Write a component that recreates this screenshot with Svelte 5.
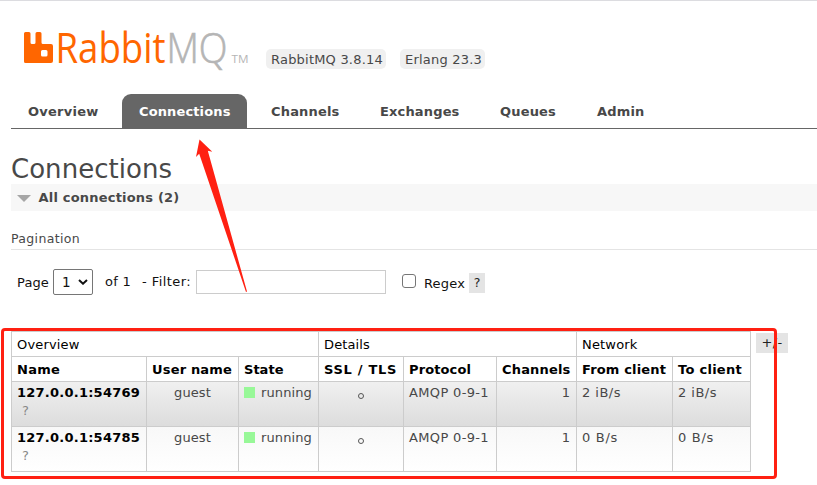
<script>
  const tabs = [
    { label: 'Overview', box: 104, text: 70.5 },
    { label: 'Connections', box: 125, text: 91.5, active: true },
    { label: 'Channels', box: 102, text: 68.5 },
    { label: 'Exchanges', box: 113, text: 79.5 },
    { label: 'Queues', box: 90, text: 56 },
    { label: 'Admin', box: 81, text: 47.5 }
  ];
  const columns = [135, 92, 80, 85, 93, 80, 96, 78];
  const groups = [
    { label: 'Overview', span: 3, text: 62.5 },
    { label: 'Details', span: 3, text: 46 },
    { label: 'Network', span: 2, text: 55.5 }
  ];
  const heads = [
    ['Name', 43], ['User name', 80], ['State', 39.5], ['SSL / TLS', 73],
    ['Protocol', 62], ['Channels', 68.5], ['From client', 84], ['To client', 64]
  ];
  const rows = [
    { name: '127.0.0.1:54769', rate: '2 iB/s', w: 39 },
    { name: '127.0.0.1:54785', rate: '0 B/s', w: 36 }
  ];

  // Spreads the tracking of a label so that it takes up the given width.
  function fit(node, width) {
    const natural = node.getBoundingClientRect().width;
    const spacing = (width - natural) / node.textContent.length;
    node.style.letterSpacing = `${spacing}px`;
  }
</script>

{#snippet label(text, width)}<span class="t" use:fit={width}>{text}</span>{/snippet}

<div class="page">
  <header>
    <svg class="logo" width="230" height="66" viewBox="0 -14 230 66">
      <path fill="#ff6600" d="M4.500 4h3.500q1.500 0 1.500 1.500v9q0 1.500 1.500 1.500h2q1.500 0 1.500-1.500v-9q0-1.500 1.500-1.500h3q1.500 0 1.500 1.500v9q0 1.500 1.500 1.500h8q2 0 2 2v15q0 2-2 2h-25.500q-1.500 0-1.500-1.500v-28q0-1.500 1.500-1.500zM21.500 22q-1.500 0-1.500 1.500v3.500q0 1.500 1.500 1.500h3.500q1.500 0 1.500-1.500v-3.500q0-1.500-1.500-1.500z" fill-rule="evenodd" />
      <text class="brand" x="34.500" y="34.500" fill="#ff6600" textLength="110" lengthAdjust="spacingAndGlyphs">Rabbit</text>
      <text class="brand thin" x="145.500" y="34.500" fill="#b5b5b5" textLength="61" lengthAdjust="spacingAndGlyphs">MQ</text>
      <text class="tm" x="210.500" y="34.500" fill="#b5b5b5" textLength="17" lengthAdjust="spacingAndGlyphs">TM</text>
    </svg>
    <span class="badge first">{@render label('RabbitMQ 3.8.14', 112)}</span>
    <span class="badge second">{@render label('Erlang 23.3', 77)}</span>
  </header>

  <nav>
    {#each tabs as tab}
      <a class:active={tab.active} style:width="{tab.box}px">{@render label(tab.label, tab.text)}</a>
    {/each}
  </nav>

  <h1>{@render label('Connections', 161)}</h1>
  <h2><i class="caret"></i>{@render label('All connections (2)', 141)}</h2>
  <h3>{@render label('Pagination', 69)}</h3>

  <div class="filter">
    <span class="page-label">{@render label('Page', 32)}</span>
    <span class="select">1<svg width="10" height="6" viewBox="0 0 10 6"><path d="M1 1l4 3.700 4-3.700" fill="none" stroke="#111" stroke-width="2" /></svg></span>
    <span class="of">{@render label('of 1', 26)}</span>
    <span class="dash">{@render label('- Filter:', 49)}</span>
    <span class="input"></span>
    <span class="check"></span>
    <span class="regex">{@render label('Regex', 41)}</span>
    <span class="help">?</span>
  </div>

  <div class="data">
    <table>
      <colgroup>
        {#each columns as w}<col style:width="{w}px" />{/each}
      </colgroup>
      <thead>
        <tr>
          {#each groups as g}<th class="group" colspan={g.span}>{@render label(g.label, g.text)}</th>{/each}
        </tr>
        <tr>
          {#each heads as [text, w]}<th>{@render label(text, w)}</th>{/each}
        </tr>
      </thead>
      <tbody>
        {#each rows as row, i}
          <tr class:alt={i === 0}>
            <td class="name">{@render label(row.name, 123)}<sub>?</sub></td>
            <td class="center">{@render label('guest', 37)}</td>
            <td><i class="dot"></i>{@render label('running', 51)}</td>
            <td class="center"><i class="ring"></i></td>
            <td>{@render label('AMQP 0-9-1', 80)}</td>
            <td class="right">1</td>
            <td>{@render label(row.rate, row.w)}</td>
            <td>{@render label(row.rate, row.w)}</td>
          </tr>
        {/each}
      </tbody>
    </table>
    <span class="toggle">{@render label('+/-', 21)}</span>
  </div>

  <div class="frame"></div>
  <svg class="arrow" width="60" height="160" viewBox="190 135 60 160">
    <path fill="#ff2012" d="M199.500 139.500L212.300 151.800L207.800 150.800L247 291.500L246 292L199.200 153.800L196 157z" />
  </svg>
</div>

<style>
  .page {
    position: relative;
    box-sizing: border-box;
    width: 817px;
    height: 485px;
    padding-left: 11px;
    overflow: hidden;
    border-top: 1px solid #dcdce0;
    background: #fff;
    color: #484848;
    font: 13px/16px Verdana, "DejaVu Sans", sans-serif;
  }
  .t { display: inline-block; white-space: nowrap; }
  header { display: flex; height: 93px; }
  .logo { flex: none; margin: 13px 0 0 10px; }
  .brand { font: 42.500px "Open Sans", sans-serif; }
  .thin { font-weight: 300; stroke: #b5b5b5; stroke-width: 0.700px; }
  .tm { font: 11px "Open Sans", sans-serif; }
  .badge {
    box-sizing: border-box;
    height: 20px;
    margin-top: 48px;
    padding: 3px 5px 1px;
    border-radius: 5px;
    background: #f0f0f0;
  }
  .first { width: 120px; margin-left: 15px; }
  .second { width: 85px; margin-left: 14px; }
  nav { display: flex; gap: 7px; height: 34px; border-bottom: 1px solid #666; }
  nav a {
    box-sizing: border-box;
    padding: 10px 0 0 17px;
    border-radius: 9px 9px 0 0;
    font-weight: bold;
  }
  nav .active { background: #666; color: #fff; }
  h1, h2, h3 { margin: 0; }
  h1 { height: 31px; padding-top: 24px; font-size: 26px; font-weight: normal; line-height: 32px; }
  h2 { display: flex; align-items: center; height: 27px; background: #f7f7f7; font-size: 13px; }
  .caret { margin: 1px 8px 0 5.500px; border: 7px solid transparent; border-top-color: #a6a6a6; border-bottom: 0; }
  h3 {
    height: 18px;
    padding-top: 20px;
    border-bottom: 1px solid #e4e4e4;
    font-size: 12.500px;
    font-weight: normal;
  }
  .filter { display: flex; height: 81px; color: #111; }
  .filter > span { box-sizing: border-box; flex: none; }
  .page-label { width: 42px; padding: 25px 0 0 6px; }
  .select {
    display: flex;
    align-items: center;
    width: 40px;
    height: 26px;
    margin-top: 19px;
    padding-left: 8px;
    gap: 7px;
    border: 1px solid #767676;
    border-radius: 2px;
    font-size: 13.500px;
  }
  .of { width: 49px; padding: 24px 0 0 12px; }
  .dash { width: 54px; padding-top: 24px; }
  .input { width: 190px; height: 24px; margin-top: 20px; border: 1px solid #ccc; }
  .check { width: 14px; height: 14px; margin: 24px 8px 0 16px; border: 1px solid #767676; border-radius: 3px; }
  .regex { width: 45px; padding-top: 26px; }
  .help, .toggle { height: 20px; background: #e4e4e4; color: #222; text-align: center; line-height: 20px; }
  .help { width: 16px; margin-top: 23px; font-size: 12.500px; }
  .data { display: flex; gap: 5px; }
  table { flex: none; width: 740px; border-collapse: collapse; table-layout: fixed; }
  th, td { box-sizing: border-box; padding: 0 5px; border: 1px solid #ccc; text-align: left; }
  th { height: 25px; padding-top: 1px; color: #000; }
  .group { font-weight: normal; }
  td { height: 45px; padding-top: 3px; vertical-align: top; }
  tbody tr { background: linear-gradient(#f8f8f8, #fff); }
  tbody .alt { background: linear-gradient(#f0f0f0, #dcdcdc); }
  .name { color: #000; font-weight: bold; }
  sub { display: block; padding: 2px 0 0 5px; color: #888; font-size: 13px; font-weight: normal; line-height: 16px; }
  .center { text-align: center; }
  .right { text-align: right; padding-right: 6px; }
  .dot { display: inline-block; width: 11px; height: 11px; margin-right: 6px; background: #98f898; vertical-align: -1px; }
  .ring { display: inline-block; box-sizing: border-box; width: 6px; height: 6px; border: 1px solid #555; border-radius: 50%; vertical-align: -2px; }
  .toggle { width: 32px; margin-top: 2px; }
  .frame {
    position: absolute;
    box-sizing: border-box;
    left: 1px;
    top: 327px;
    width: 776px;
    height: 151px;
    border: 3px solid #ff2012;
    border-radius: 4px;
  }
  .arrow { position: absolute; left: 190px; top: 134px; }
</style>
